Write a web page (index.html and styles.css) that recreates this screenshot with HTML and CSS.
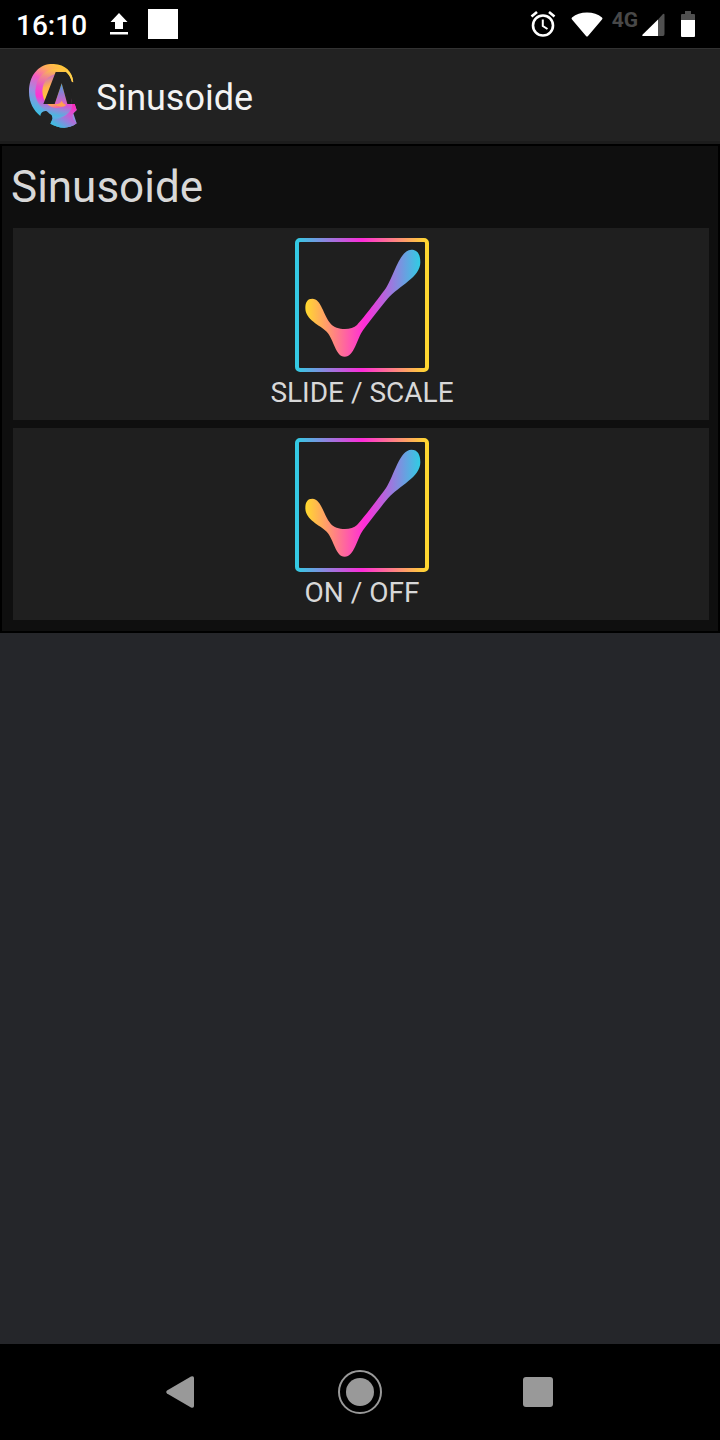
FILE: index.html
```html
<!DOCTYPE html>
<html lang="en">
<head>
<meta charset="utf-8">
<meta name="viewport" content="width=device-width, initial-scale=1">
<title>Sinusoide</title>
<link rel="stylesheet" href="styles.css">
</head>
<body>
<div class="status-bar">
  <div class="status-left">
    <time class="clock">16:10</time>
    <svg class="upload" width="18" height="22" viewBox="0 0 18 22" aria-hidden="true"><path d="M9 0L17.500 9H13V16H5V9H.5ZM0 19H18V21.500H0Z" fill="#fff"/></svg>
    <span class="notice"></span>
  </div>
  <div class="status-right">
    <svg class="alarm" width="26" height="26" viewBox="0 0 26 26" fill="none" stroke="#fff" aria-hidden="true"><circle cx="13" cy="14.500" r="10" stroke-width="2.600"/><path d="M12.800 8.500V15L17.500 18" stroke-width="2"/><path d="M1.500 5.500L7 1M24.500 5.500L19 1" stroke-width="2.600"/></svg>
    <svg class="wifi" width="32" height="25" viewBox="0 0 32 25" aria-hidden="true"><path d="M1 5.500Q7 .5 16 .5T31 5.500Q32 6.500 31 7.500L17 24Q16 25 15 24L1 7.500Q0 6.500 1 5.500Z" fill="#fff"/></svg>
    <span class="network">4G</span>
    <svg class="signal" width="23" height="23" viewBox="0 0 23 23" aria-hidden="true"><path d="M16 6.500L21 1Q22.500 0 22.500 2V21Q22.500 23 21 23H16Z" fill="#505050"/><path d="M16 6.500V23H1Q-.5 23 .7 21.500Z" fill="#fff"/></svg>
    <svg class="battery" width="14" height="26" viewBox="0 0 14 26" aria-hidden="true"><path d="M4 0H10V3H13Q14 3 14 4V9H0V4Q0 3 1 3H4Z" fill="#505050"/><path d="M0 9H14V25Q14 26 13 26H1Q0 26 0 25Z" fill="#fff"/></svg>
  </div>
</div>

<header class="app-bar">
  <svg class="logo" width="48" height="64" viewBox="26 24 144 192" aria-hidden="true">
    <defs>
      <linearGradient id="ring" gradientUnits="userSpaceOnUse" x1="130" y1="24" x2="40" y2="175"><stop offset="0" stop-color="#ffd02e"/><stop offset=".22" stop-color="#ffa860"/><stop offset=".42" stop-color="#f35bc4"/><stop offset=".65" stop-color="#a08be0"/><stop offset="1" stop-color="#2cc8e4"/></linearGradient>
      <linearGradient id="middle" gradientUnits="userSpaceOnUse" x1="120" y1="40" x2="90" y2="185"><stop offset="0" stop-color="#ffcf35"/><stop offset=".2" stop-color="#f08a8a"/><stop offset=".42" stop-color="#e850cc"/><stop offset=".62" stop-color="#ff32d2"/><stop offset=".82" stop-color="#8f8edb"/><stop offset="1" stop-color="#28cce2"/></linearGradient>
      <linearGradient id="core" gradientUnits="userSpaceOnUse" x1="80" y1="60" x2="115" y2="155"><stop offset="0" stop-color="#c96fc8"/><stop offset=".3" stop-color="#ffb04e"/><stop offset=".6" stop-color="#ffc53e"/><stop offset=".85" stop-color="#ff9b5c"/><stop offset="1" stop-color="#f060b0"/></linearGradient>
      <linearGradient id="peak" x1="0" y1="0" x2="0" y2="1"><stop offset="0" stop-color="#45a5d8"/><stop offset=".5" stop-color="#9a78d2"/><stop offset="1" stop-color="#e85fc0"/></linearGradient>
      <linearGradient id="tail" gradientUnits="userSpaceOnUse" x1="160" y1="145" x2="115" y2="212"><stop offset="0" stop-color="#ff28ba"/><stop offset=".3" stop-color="#e04cd0"/><stop offset=".65" stop-color="#9a7edc"/><stop offset="1" stop-color="#45b8e0"/></linearGradient>
    </defs>
    <path d="M90 24C130 22 157 43 159 79L155 78C150 62 145 53 139 48L155 144L163 144L169 162L159 172L169 202C145 222 112 216 90 203L96 190C97 175 88 164 75 165C66 165 61 172 60 180C40 164 26 140 26 108C26 60 53 27 90 24Z" fill="url(#ring)"/>
    <path d="M47 92C52 60 79 39 108 40Q132 40 139 48L150 126C152 143 154 150 158 158C130 190 97 187 80 166C54 153 39 120 47 92Z" fill="url(#middle)"/>
    <path d="M66 104C68 75 83 60 108 53L142 105C145 126 139 145 124 153C101 163 66 147 66 104Z" fill="url(#core)"/>
    <path d="M124 82L141 144Q122 152 103 144Z" fill="url(#peak)"/>
    <path d="M103 144Q120 145 124 134Q130 147 139 146Q122 160 103 144Z" fill="#ffa052"/>
    <path d="M91 203L97 188C120 191 140 178 149 165Q157 156 155 144H163L169 162L159 172Q151 183 169 202C145 222 111 216 91 203Z" fill="url(#tail)"/>
    <path d="M106 48H139Q145 58 149 74L155 144H141L124 82L103 144H69Z" fill="#222"/>
    <path d="M138 42C151 50 158 62 158 78L155 78C151 64 145 55 137 48Z" fill="#ffd24a"/>
  </svg>
  <span class="app-title">Sinusoide</span>
</header>

<main class="content">
  <section class="panel">
    <h1 class="panel-title">Sinusoide</h1>
    <div class="tiles">
      <button class="tile" type="button">
        <svg class="check" width="134" height="134" viewBox="27 24 402 402" aria-hidden="true">
          <defs>
            <linearGradient id="frame-fill" gradientUnits="userSpaceOnUse" x1="33" y1="0" x2="423" y2="0"><stop offset="0" stop-color="#33cae3"/><stop offset=".5" stop-color="#ff2bd9"/><stop offset="1" stop-color="#ffd82f"/></linearGradient>
            <linearGradient id="check-fill" gradientUnits="userSpaceOnUse" x1="60" y1="0" x2="400" y2="0"><stop offset="0" stop-color="#ffd82f"/><stop offset=".52" stop-color="#ff2bd9"/><stop offset="1" stop-color="#33cae3"/></linearGradient>
          </defs>
          <rect x="33" y="30" width="390" height="390" rx="9" fill="none" stroke="url(#frame-fill)" stroke-width="12"/>
          <path d="M58 234C58 216 65 206 79 206C106 206 112 256 134 281C149 300 195 303 213 285C235 261 279 203 300 174C323 139 341 59 376 59C395 59 403 73 403 97C403 142 340 167 306 205C286 229 253 272 232 299C213 324 205 380 176 380C149 380 144 329 122 305C102 285 58 270 58 234Z" fill="url(#check-fill)"/>
        </svg>
        <span class="tile-label">SLIDE / SCALE</span>
      </button>
      <button class="tile" type="button">
        <svg class="check" width="134" height="134" viewBox="27 24 402 402" aria-hidden="true">
          <rect x="33" y="30" width="390" height="390" rx="9" fill="none" stroke="url(#frame-fill)" stroke-width="12"/>
          <path d="M58 234C58 216 65 206 79 206C106 206 112 256 134 281C149 300 195 303 213 285C235 261 279 203 300 174C323 139 341 59 376 59C395 59 403 73 403 97C403 142 340 167 306 205C286 229 253 272 232 299C213 324 205 380 176 380C149 380 144 329 122 305C102 285 58 270 58 234Z" fill="url(#check-fill)"/>
        </svg>
        <span class="tile-label">ON / OFF</span>
      </button>
    </div>
  </section>
</main>

<nav class="nav-bar" aria-label="System">
  <button class="nav-button" type="button" aria-label="Back"><svg width="32" height="32" viewBox="0 0 32 32"><path d="M1 14.500L25 .5Q28-.5 28 2V30Q28 32.500 25 31.500L1 17.500Q-.5 16 1 14.500Z" fill="#999"/></svg></button>
  <button class="nav-button" type="button" aria-label="Home"><svg width="44" height="44" viewBox="0 0 44 44"><circle cx="22" cy="22" r="21" fill="none" stroke="#999" stroke-width="2"/><circle cx="22" cy="22" r="14" fill="#999"/></svg></button>
  <button class="nav-button" type="button" aria-label="Recent apps"><svg width="30" height="30" viewBox="0 0 30 30"><rect width="30" height="30" rx="3" fill="#999"/></svg></button>
</nav>
</body>
</html>
```
FILE: styles.css
```css
* { box-sizing: border-box; }

body {
  margin: 0;
  min-height: 100vh;
  display: flex;
  flex-direction: column;
  background: #25262a;
  color: #d8d8d8;
  font-family: Roboto, "Noto Sans", sans-serif;
}

svg { display: block; flex: none; }

button {
  border: 0;
  padding: 0;
  color: inherit;
  font: inherit;
  cursor: pointer;
}

.status-bar {
  display: flex;
  justify-content: space-between;
  height: 48px;
  padding: 0 25px 0 16px;
  background: #000;
}

.status-left,
.status-right {
  display: flex;
  align-items: center;
}

.clock {
  color: #fff;
  font-size: 28px;
  font-weight: 500;
  line-height: 32px;
  padding-top: 4px;
}

.upload { margin: 0 20px 0 23px; }

.notice {
  width: 30px;
  height: 30px;
  background: #fff;
}

.wifi { margin: 0 9px 0 15px; }

.network {
  color: #484848;
  font-size: 21px;
  font-weight: 700;
  line-height: 20px;
  padding-bottom: 8px;
}

.signal { margin: 0 16px 0 4px; }

.app-bar {
  display: flex;
  align-items: center;
  gap: 19px;
  height: 96px;
  padding: 2px 29px 0;
  background: #222;
  border-top: 1px solid #323232;
  border-bottom: 3px solid #1c1c1c;
}

.app-title {
  color: #f3f3f3;
  font-size: 36px;
  line-height: 44px;
  padding-top: 4px;
}

.content { flex: 1; }

.panel {
  padding: 13px 9px 11px 11px;
  border: 2px solid #000;
  background: #0f0f0f;
}

.panel-title {
  margin: 0 0 13px -2px;
  font-size: 44px;
  font-weight: 400;
  line-height: 56px;
}

.tiles {
  display: grid;
  gap: 8px;
}

.tile {
  display: flex;
  flex-direction: column;
  align-items: center;
  gap: 5px;
  padding: 10px 0 11px 2px;
  background: #1f1f1f;
}

.tile-label {
  font-size: 28px;
  line-height: 32px;
}

.nav-bar {
  display: grid;
  grid-template-columns: repeat(3, 178px);
  justify-content: center;
  height: 96px;
  background: #000;
}

.nav-button {
  display: flex;
  align-items: center;
  justify-content: center;
  background: none;
}
```
